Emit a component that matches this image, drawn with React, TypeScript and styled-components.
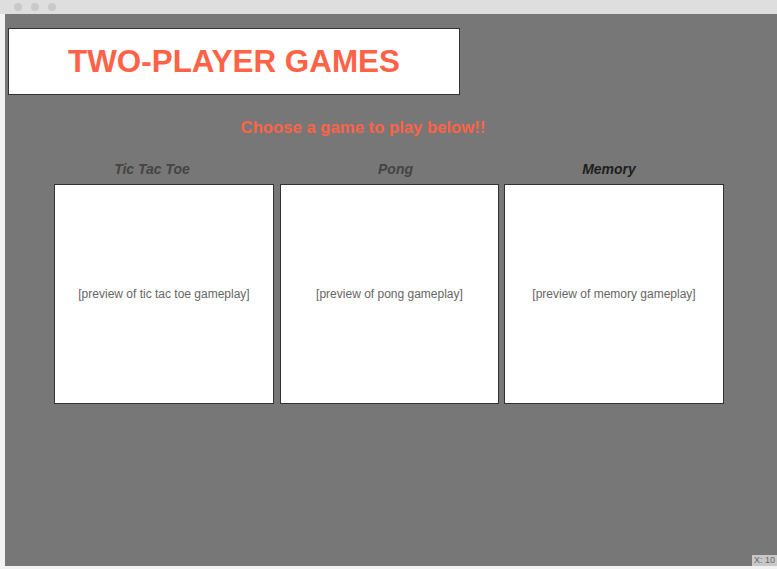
import React from "react";
import styled, { createGlobalStyle } from "styled-components";

const Global = createGlobalStyle`
  html, body { margin: 0; padding: 0; background: #f2f2f2; }
  body { font-family: "Liberation Sans", Arial, sans-serif; }
`;

const Frame = styled.div`
  width: 777px;
  height: 569px;
  display: flex;
  flex-direction: column;
  overflow: hidden;
  position: relative;
  background: #f2f2f2;
`;

const TitleBar = styled.div`
  height: 14px;
  flex: none;
  background: #dedede;
  display: flex;
  align-items: center;
  gap: 9px;
  padding-left: 14px;
`;

const Dot = styled.span`
  width: 8px;
  height: 8px;
  border-radius: 50%;
  background: #c9c9c9;
`;

const Body = styled.div`
  flex: 1;
  display: flex;
  padding-left: 5px;
  padding-bottom: 3px;
`;

const Stage = styled.main`
  flex: 1;
  background: #777777;
  padding: 14px 0 0 3px;
  display: flex;
  flex-direction: column;
`;

const Header = styled.header`
  width: 450px;
  height: 65px;
  background: #ffffff;
  border: 1px solid #333333;
  display: flex;
  align-items: center;
  justify-content: center;
`;

const Title = styled.h1`
  margin: 0;
  font-size: 31.4px;
  font-weight: bold;
  color: #ff6347;
`;

const Subtitle = styled.h2`
  margin: 22px 0 0 0;
  padding-right: 59px;
  text-align: center;
  font-size: 16.7px;
  font-weight: bold;
  color: #ff6347;
  line-height: 22px;
`;

const Games = styled.section`
  margin: 22px 0 0 46px;
  display: flex;
`;

const Column = styled.div<{ $gap: number }>`
  display: flex;
  flex-direction: column;
  gap: 7px;
  margin-left: ${(p) => p.$gap}px;
`;

const GameName = styled.h3<{ $dark?: boolean; $shift: number }>`
  margin: 0;
  height: 16px;
  line-height: 16px;
  font-size: 14px;
  font-weight: bold;
  font-style: italic;
  text-align: center;
  padding-left: ${(p) => Math.max(0, p.$shift)}px;
  padding-right: ${(p) => Math.max(0, -p.$shift)}px;
  color: ${(p) => (p.$dark ? "#1e1e1e" : "#444444")};
`;

const Card = styled.div<{ $w: number }>`
  width: ${(p) => p.$w}px;
  height: 218px;
  background: #ffffff;
  border: 1px solid #333333;
  display: flex;
  align-items: center;
  justify-content: center;
  font-size: 12px;
  color: #666666;
`;

const Coords = styled.div`
  position: absolute;
  right: 0;
  bottom: 3px;
  width: 23px;
  height: 11px;
  background: #c8c8c8;
  color: #666;
  font-family: "Liberation Sans", Arial, sans-serif;
  font-size: 9px;
  line-height: 11px;
  padding-left: 2px;
  white-space: nowrap;
`;

const games = [
  { name: "Tic Tac Toe", preview: "[preview of tic tac toe gameplay]", shift: -24, w: 218, gap: 0, dark: false },
  { name: "Pong", preview: "[preview of pong gameplay]", shift: 12, w: 217, gap: 6, dark: false },
  { name: "Memory", preview: "[preview of memory gameplay]", shift: -10, w: 218, gap: 5, dark: true },
];

export default function App() {
  return (
    <Frame>
      <Global />
      <TitleBar>
        <Dot />
        <Dot />
        <Dot />
      </TitleBar>
      <Body>
        <Stage>
          <Header>
            <Title>TWO-PLAYER GAMES</Title>
          </Header>
          <Subtitle>Choose a game to play below!!</Subtitle>
          <Games>
            {games.map((g) => (
              <Column key={g.name} $gap={g.gap}>
                <GameName $dark={g.dark} $shift={g.shift}>
                  {g.name}
                </GameName>
                <Card $w={g.w}>{g.preview}</Card>
              </Column>
            ))}
          </Games>
        </Stage>
      </Body>
      <Coords>X: 10</Coords>
    </Frame>
  );
}
